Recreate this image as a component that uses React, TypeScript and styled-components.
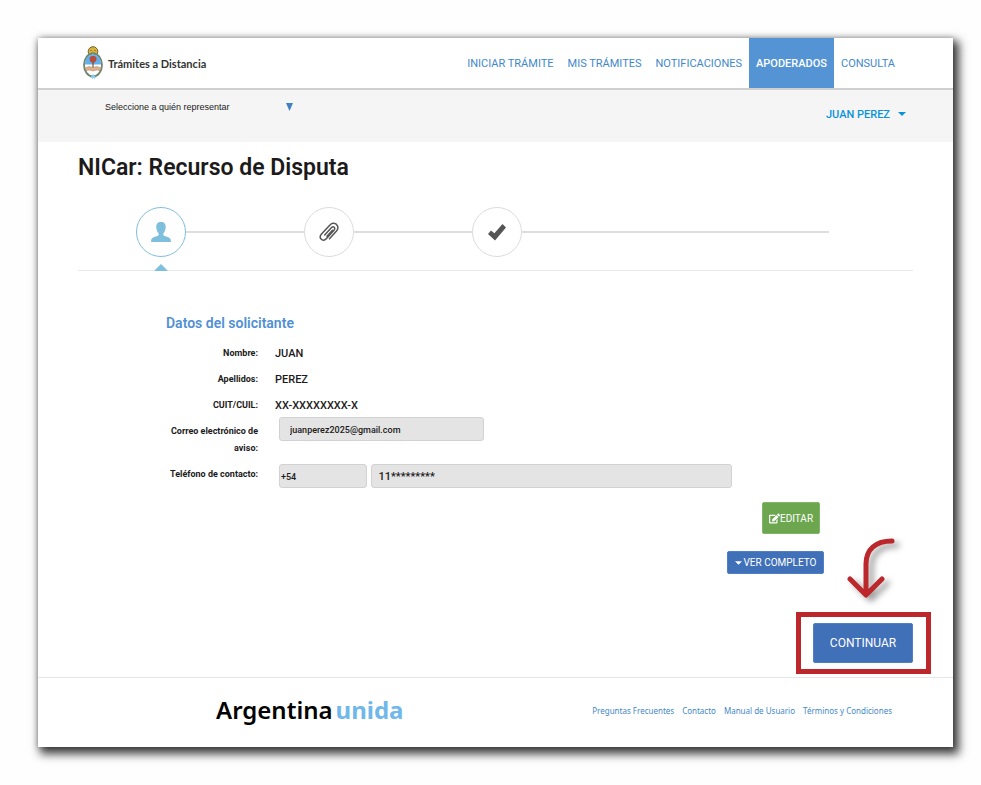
import React from "react";
import styled, { createGlobalStyle, css } from "styled-components";
import { FaEdit } from "react-icons/fa";

const GlobalStyle = createGlobalStyle`
  *, *::before, *::after { box-sizing: border-box; }
  body {
    margin: 0;
    background: #fefefe;
    color: #1c1a1a;
    font-family: Roboto, "Liberation Sans", sans-serif;
    font-size: 10px;
  }
  h1, h2, p, ul, ol, dl, dd { margin: 0; padding: 0; }
  ul, ol { list-style: none; }
  a { color: inherit; text-decoration: none; }
  button, input, select { font: inherit; }
`;

const Stage = styled.div`
  padding: 38px 28px 38px 38px;
`;

const Sheet = styled.div`
  background: #fff;
  box-shadow: 4px 5px 9px 2px rgba(0, 0, 0, 0.75), 0 0 6px rgba(0, 0, 0, 0.25);
`;

const Header = styled.header`
  display: flex;
  align-items: stretch;
  justify-content: space-between;
  height: 52px;
  padding: 0 51px 0 44px;
  border-bottom: 2px solid #d0d0d0;
`;

const Brand = styled.a`
  display: flex;
  align-items: center;
  gap: 4px;
  color: #333;
  font: 700 11px Lato, "Open Sans", sans-serif;
`;

const Menu = styled.nav`
  display: flex;
`;

const MenuLink = styled.a<{ $active?: boolean }>`
  display: flex;
  align-items: center;
  padding: 0 7px;
  font-size: 11px;
  font-weight: ${(p) => (p.$active ? 500 : 400)};
  color: ${(p) => (p.$active ? "#fff" : "#3f88cc")};
  background: ${(p) => (p.$active ? "#5494d4" : "transparent")};
`;

const UserBar = styled.div`
  display: flex;
  align-items: flex-start;
  justify-content: space-between;
  height: 52px;
  padding: 8px 47px 0 67px;
  background: #f5f5f5;
`;

const SelectWrap = styled.label`
  display: grid;
  grid-template-columns: 181px 7px;
  align-items: center;
  color: #4080c4;

  svg {
    grid-area: 1 / 2;
    pointer-events: none;
  }
`;

const Picker = styled.select`
  grid-area: 1 / 1 / 2 / 3;
  appearance: none;
  height: 18px;
  padding: 0;
  border: 0;
  background: transparent;
  color: #1c1a1a;
  font: 9px "Liberation Sans", Arial, sans-serif;
`;

const UserButton = styled.button`
  display: flex;
  align-items: center;
  gap: 8px;
  height: 32px;
  padding: 0;
  border: 0;
  background: none;
  color: #0a93d8;
  font-size: 11px;
  font-weight: 500;
`;

const Main = styled.main`
  padding: 0 40px;
`;

const Title = styled.h1`
  padding-top: 10px;
  font-size: 23px;
  font-weight: 600;
  line-height: 32px;
`;

const Steps = styled.ol`
  display: flex;
  margin-top: 23px;
  padding: 0 84px 13px 58px;
  border-bottom: 1px solid #eaeaea;
`;

const Step = styled.li<{ $grow: number; $active?: boolean }>`
  position: relative;
  display: flex;
  align-items: center;
  flex: ${(p) => p.$grow} 1 50px;
  color: ${(p) => (p.$active ? "#7fbfde" : "#555")};

  &::after {
    content: "";
    flex: 1;
    height: 2px;
    background: #dedede;
  }
  ${(p) =>
    p.$active &&
    css`
      &::before {
        content: "";
        position: absolute;
        left: 18px;
        bottom: -14px;
        border: solid transparent;
        border-width: 0 7px 7px;
        border-bottom-color: #7fbfde;
      }
    `}
`;

const StepDisc = styled.span<{ $active?: boolean }>`
  display: grid;
  place-items: center;
  width: 50px;
  height: 50px;
  border: 1px solid ${(p) => (p.$active ? "#7fbfde" : "#dcdcdc")};
  border-radius: 50%;
`;

const Applicant = styled.form`
  margin: 0 0 0 88px;
  padding-top: 43px;
`;

const Subtitle = styled.h2`
  color: #5090d4;
  font-size: 14px;
  font-weight: 600;
  line-height: 18px;
  margin-bottom: 13px;
`;

const Row = styled.div`
  display: grid;
  grid-template-columns: 92px 1fr;
  column-gap: 17px;
  min-height: 26px;
  line-height: 17px;
`;

const rowLabel = css`
  font-size: 9px;
  font-weight: 700;
  text-align: right;
`;
const Caption = styled.span`
  ${rowLabel}
`;
const FieldLabel = styled.label`
  ${rowLabel}
`;

const Value = styled.span`
  font-size: 11px;
  font-weight: 500;
`;

const Fields = styled.div`
  display: flex;
  align-items: flex-start;
  gap: 4px;
  padding: 0 181px 9px 4px;
`;

const Field = styled.input<{ $grow: number; $pad: number; $size: number }>`
  flex: ${(p) => p.$grow} 1 0;
  min-width: 0;
  height: 24px;
  padding: 1px ${(p) => p.$pad}px 0;
  border: 1px solid #d2d2d2;
  border-radius: 3px;
  background: #e4e4e4;
  color: #1c1a1a;
  font-size: ${(p) => p.$size}px;
  font-weight: 500;
`;

const EmailFields = styled(Fields)`
  padding: 0 181px 0 4px;
  margin-top: -6px;

  &::after {
    content: "";
    flex: 244 1 0;
  }
`;

const PhoneRow = styled(Row)`
  margin-top: 9px;
`;

const PhoneFields = styled(Fields)`
  margin-top: -2px;
`;

const Actions = styled.div`
  display: flex;
  flex-direction: column;
  align-items: flex-end;
`;

const Button = styled.button<{ $tone: "green" | "blue" }>`
  display: flex;
  align-items: center;
  justify-content: center;
  border: 1px solid ${(p) => (p.$tone === "green" ? "#7fb565" : "#4f7fc4")};
  border-radius: 2px;
  padding: 0;
  color: #fff;
  background: ${(p) => (p.$tone === "green" ? "#6ca64e" : "#4070b8")};
`;

const EditButton = styled(Button)`
  width: 58px;
  height: 32px;
  margin: 5px 93px 17px 0;
`;

const ExpandButton = styled(Button)`
  gap: 2px;
  width: 97px;
  height: 23px;
  margin: 0 89px 38px 0;
`;

const Highlight = styled.div`
  position: relative;
  padding: 6px 13px 6px 12px;
  margin: 0 -18px 3px 0;
  border: 5px solid #bc272b;
`;

const ContinueButton = styled(Button)`
  width: 100px;
  height: 40px;
  font-size: 12px;
`;

const Arrow = styled.svg`
  position: absolute;
  right: 24px;
  bottom: 73px;
  overflow: visible;
  filter: drop-shadow(5px 4px 3px rgba(0, 0, 0, 0.4));
`;

const Footer = styled.footer`
  display: flex;
  align-items: center;
  justify-content: space-between;
  height: 70px;
  padding: 0 61px 4px 178px;
  border-top: 1px solid #e6e6e6;
`;

const Wordmark = styled.p`
  display: flex;
  gap: 3px;
  padding-bottom: 3px;
  color: #000;
  font: 600 24px "Noto Sans", "Open Sans", sans-serif;

  span {
    color: #70b8ea;
    font-weight: 700;
  }
`;

const FooterLinks = styled.nav`
  display: flex;
  gap: 8px;
  color: #4388c8;
  font: 8px "Noto Sans", "Open Sans", sans-serif;
`;

const Crest = () => (
  <svg width="22" height="34" viewBox="0 0 22 34" aria-hidden="true">
    <circle cx="11" cy="5.5" r="4.8" fill="#d9b43c" stroke="#6d6034" strokeWidth="1" />
    <path d="M8.5 4.5h1M12.5 4.5h1M9.5 7.2h3" stroke="#705921" strokeWidth="1" />
    <ellipse cx="11" cy="19" rx="9" ry="11.500" fill="#fff" stroke="#6f876c" strokeWidth="1.800" />
    <path d="M3 18.5C3 12 6.500 8.500 11 8.500s8 3.500 8 10z" fill="#63afea" />
    <path d="M11 14v9" stroke="#754d37" strokeWidth="1.200" />
    <path d="M8 15c-1-3 0-5 3-5s4.300 2 3 5l-1.500 1.500h-3z" fill="#b84d3c" />
    <path d="M3 22l4-1.500 4 1 4-1 4 1.500-1 2.500-3.500-.5-3.500 1-3.500-1-3.500.5z" fill="#dfb08c" stroke="#a87f62" strokeWidth=".5" />
    <path d="M11 28l-3 4 2-.5.5 2 .8-2 1.200 2 .2-2 2 .5z" fill="#8bcaf0" />
  </svg>
);

const PersonIcon = () => (
  <svg width="20" height="20" viewBox="0 0 20 20" fill="currentColor" aria-hidden="true">
    <path d="M10 0C6.500 0 5.200 2 5.300 5c.1 2.800 1 5 2.400 6.400v1.700c-.8 1.300-6.500 2-7.400 4.300L0 20h20l-.3-2.600c-.9-2.300-6.600-3-7.400-4.300v-1.700c1.400-1.400 2.300-3.600 2.400-6.400C14.800 2 13.500 0 10 0z" />
  </svg>
);

const ClipIcon = () => (
  <svg width="20" height="20" viewBox="0 0 20 20" fill="none" stroke="currentColor" strokeWidth="1.500" strokeLinecap="round" strokeLinejoin="round" aria-hidden="true">
    <path d="M13.500 8.200L8 14.300M10.500 16.800L17.500 9C20.500 5.500 18 .8 14 1.300C12.500 1.500 11.500 2.300 10.500 3.400L2.500 12C-.8 15.800 3.200 20 6.800 17.200L14.800 8.500C17 5.800 14.500 3.600 12.300 5.700L5.700 13" />
  </svg>
);

const CheckIcon = () => (
  <svg width="18" height="17" viewBox="0 0 18 17" fill="currentColor" aria-hidden="true">
    <path d="M14.500 0L18 3.500 7 16.500 0 10l3-3.600 3.400 2.900z" />
  </svg>
);

const menu = ["INICIAR TRÁMITE", "MIS TRÁMITES", "NOTIFICACIONES", "APODERADOS", "CONSULTA"];
const people = [
  ["Nombre:", "JUAN"],
  ["Apellidos:", "PEREZ"],
  ["CUIT/CUIL:", "XX-XXXXXXXX-X"],
];
const links = ["Preguntas Frecuentes", "Contacto", "Manual de Usuario", "Términos y Condiciones"];

export default function App() {
  return (
    <>
      <GlobalStyle />
      <Stage>
        <Sheet>
          <Header>
            <Brand href="#">
              <Crest />
              Trámites a Distancia
            </Brand>
            <Menu>
              {menu.map((item) => (
                <MenuLink key={item} href="#" $active={item === "APODERADOS"}>
                  {item}
                </MenuLink>
              ))}
            </Menu>
          </Header>
          <UserBar>
            <SelectWrap>
              <Picker aria-label="Seleccione a quién representar">
                <option>Seleccione a quién representar</option>
              </Picker>
              <svg width="7" height="8" viewBox="0 0 8 8" preserveAspectRatio="none" fill="currentColor" aria-hidden="true">
                <path d="M0 0h8L4 8z" />
              </svg>
            </SelectWrap>
            <UserButton type="button">
              JUAN PEREZ
              <svg width="8" height="4" viewBox="0 0 8 4" fill="currentColor" aria-hidden="true">
                <path d="M0 0h8L4 4z" />
              </svg>
            </UserButton>
          </UserBar>
          <Main>
            <Title>NICar: Recurso de Disputa</Title>
            <Steps>
              <Step $grow={118} $active>
                <StepDisc $active>
                  <PersonIcon />
                </StepDisc>
              </Step>
              <Step $grow={118}>
                <StepDisc>
                  <ClipIcon />
                </StepDisc>
              </Step>
              <Step $grow={308}>
                <StepDisc>
                  <CheckIcon />
                </StepDisc>
              </Step>
            </Steps>
            <Applicant>
              <Subtitle>Datos del solicitante</Subtitle>
              {people.map(([name, value]) => (
                <Row key={name}>
                  <Caption>{name}</Caption>
                  <Value>{value}</Value>
                </Row>
              ))}
              <Row>
                <FieldLabel htmlFor="email">Correo electrónico de aviso:</FieldLabel>
                <EmailFields>
                  <Field id="email" type="email" readOnly defaultValue="juanperez2025@gmail.com" $grow={183} $pad={10} $size={9} />
                </EmailFields>
              </Row>
              <PhoneRow>
                <FieldLabel htmlFor="phone">Teléfono de contacto:</FieldLabel>
                <PhoneFields>
                  <Field aria-label="Código de país" readOnly defaultValue="+54" $grow={88} $pad={1} $size={9} />
                  <Field id="phone" type="tel" readOnly defaultValue="11*********" $grow={361} $pad={6} $size={11} />
                </PhoneFields>
              </PhoneRow>
            </Applicant>
            <Actions>
              <EditButton type="button" $tone="green">
                <FaEdit size={11} />
                EDITAR
              </EditButton>
              <ExpandButton type="button" $tone="blue">
                <svg width="7" height="4" viewBox="0 0 8 4" fill="currentColor" aria-hidden="true">
                  <path d="M0 0h8L4 4z" />
                </svg>
                VER COMPLETO
              </ExpandButton>
              <Highlight>
                <ContinueButton type="button" $tone="blue">
                  CONTINUAR
                </ContinueButton>
                <Arrow width="60" height="60" viewBox="842 536 60 60" fill="none" stroke="#bc272b" strokeWidth="5" strokeLinecap="round" strokeLinejoin="round" aria-hidden="true">
                  <path d="M892 541C876 541 866 549 866 564V594M850 579L866 595L882 579" />
                </Arrow>
              </Highlight>
            </Actions>
          </Main>
          <Footer>
            <Wordmark>
              Argentina <span>unida</span>
            </Wordmark>
            <FooterLinks>
              {links.map((item) => (
                <a key={item} href="#">
                  {item}
                </a>
              ))}
            </FooterLinks>
          </Footer>
        </Sheet>
      </Stage>
    </>
  );
}
